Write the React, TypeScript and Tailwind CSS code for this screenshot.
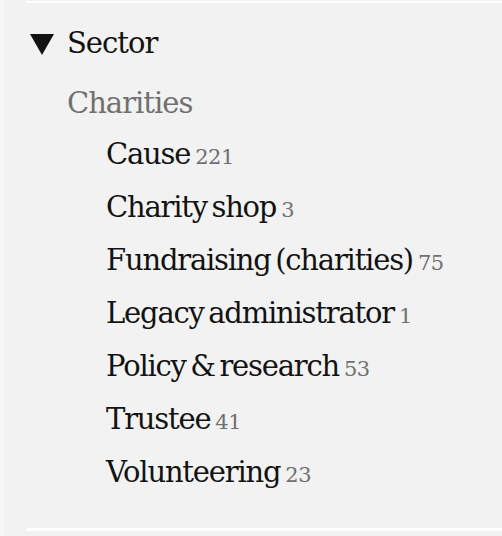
import React from "react";

const items: [string, number][] = [
  ["Cause", 221],
  ["Charity shop", 3],
  ["Fundraising (charities)", 75],
  ["Legacy administrator", 1],
  ["Policy & research", 53],
  ["Trustee", 41],
  ["Volunteering", 23],
];

export default function App() {
  return (
    <div
      className="w-[502px] h-[536px] bg-[#f7f7f7] pl-[4px] overflow-hidden"
      style={{ fontFamily: '"DejaVu Serif", serif' }}
    >
      <div className="h-full bg-[#f2f2f2] pt-[1px]">
        <div className="ml-[22px] h-[530px] border-t-2 border-b-[3px] border-white">
          <div className="flex items-center pt-[14px] h-[67px] text-[29px] leading-[53px] text-[#121212] tracking-[-1px]">
            <svg width="24" height="21" viewBox="0 0 24 21" className="ml-[4px] mr-[13px] mt-[2px]">
              <polygon points="0,0 24,0 12,21" fill="#121212" />
            </svg>
            <span>Sector</span>
          </div>
          <div className="pl-[41px] mt-[8px] text-[29px] leading-[50px] text-[#707070] tracking-[-1px]">
            Charities
          </div>
          <ul className="pl-[80px]">
            {items.map(([name, n]) => (
              <li
                key={name}
                className="h-[53px] text-[29px] leading-[53px] text-[#121212] tracking-[-1.2px] [word-spacing:-3.5px] whitespace-nowrap"
              >
                {name}
                <span className="text-[21px] leading-none text-[#707070] ml-[5px] tracking-[-0.5px]">{n}</span>
              </li>
            ))}
          </ul>
        </div>
      </div>
    </div>
  );
}
